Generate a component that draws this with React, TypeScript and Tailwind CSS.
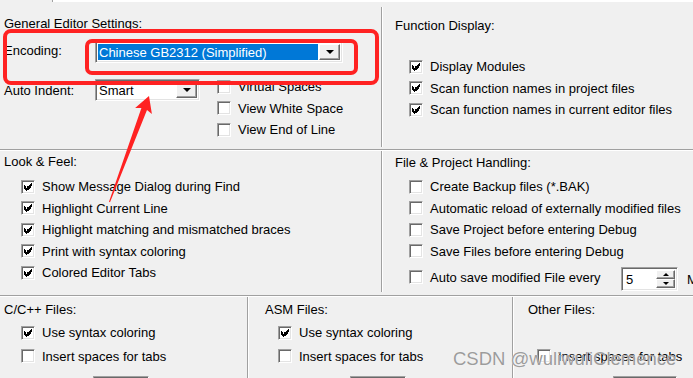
import clsx from "clsx";

const SUNKEN =
  "border border-t-[#a0a0a0] border-l-[#a0a0a0] border-b-white border-r-white";
const SUNKEN_INNER = "shadow-[inset_1px_1px_0_#696969,inset_-1px_-1px_0_#e3e3e3]";
const RAISED =
  "border border-t-white border-l-white border-b-[#696969] border-r-[#696969] shadow-[inset_-1px_-1px_0_#a0a0a0] bg-[#f0f0f0]";

function CheckMark() {
  // classic 7x7 pixel tick
  return (
    <svg width="8" height="8" viewBox="0 0 7 7" shapeRendering="crispEdges">
      <rect x="6" y="0" width="1" height="1" />
      <rect x="5" y="1" width="2" height="1" />
      <rect x="0" y="2" width="1" height="1" />
      <rect x="4" y="2" width="3" height="1" />
      <rect x="0" y="3" width="2" height="1" />
      <rect x="3" y="3" width="3" height="1" />
      <rect x="0" y="4" width="5" height="1" />
      <rect x="1" y="5" width="3" height="1" />
      <rect x="2" y="6" width="1" height="1" />
    </svg>
  );
}

function Box({ checked }: { checked?: boolean }) {
  return (
    <span
      className={clsx(
        "flex h-[14px] w-[14px] shrink-0 items-center justify-center bg-white",
        SUNKEN,
        SUNKEN_INNER
      )}
    >
      {checked && <CheckMark />}
    </span>
  );
}

function Row({ label, checked, className }: { label: string; checked?: boolean; className?: string }) {
  return (
    <div className={clsx("flex items-center gap-[7px] whitespace-nowrap", className ?? "h-[21.5px]")}>
      <Box checked={checked} />
      <span>{label}</span>
    </div>
  );
}

function DownTri() {
  return <span className="h-0 w-0 border-x-[4px] border-t-[4px] border-x-transparent border-t-black" />;
}

function Combo({ width, value, selected }: { width: string; value: string; selected?: boolean }) {
  return (
    <div className={clsx("h-[22px] shrink-0", width, SUNKEN)}>
      <div className={clsx("flex h-full bg-white p-[2px]", SUNKEN_INNER)}>
        <span
          className={clsx(
            "flex flex-1 items-center whitespace-nowrap pl-[1px]",
            selected && "bg-[#0078d7] text-white"
          )}
        >
          {value}
        </span>
        <span className={clsx("ml-[1px] flex w-[21px] items-center justify-center", RAISED)}>
          <DownTri />
        </span>
      </div>
    </div>
  );
}

function Spinner() {
  return (
    <div className={clsx("h-[24px] w-[57px] shrink-0", SUNKEN)}>
      <div className={clsx("flex h-full bg-white p-[2px]", SUNKEN_INNER)}>
        <span className="flex flex-1 items-center pl-[2px]">5</span>
        <div className="flex w-[19px] flex-col">
          <span className={clsx("flex flex-1 items-center justify-center", RAISED)}>
            <span className="h-0 w-0 border-x-[3px] border-b-[3px] border-x-transparent border-b-black" />
          </span>
          <span className={clsx("flex flex-1 items-center justify-center", RAISED)}>
            <span className="h-0 w-0 border-x-[3px] border-t-[3px] border-x-transparent border-t-black" />
          </span>
        </div>
      </div>
    </div>
  );
}

function TabSize({ className, width }: { className: string; width: string }) {
  return (
    <div className={clsx("h-[20px]", width, className, SUNKEN)}>
      <div className={clsx("flex h-full justify-end bg-white p-[2px]", SUNKEN_INNER)}>
        <span className={clsx("w-[17px]", RAISED)} />
      </div>
    </div>
  );
}

function HLine() {
  return <div className="h-[2px] border-t border-b border-t-[#a0a0a0] border-b-white" />;
}

function VLine({ className }: { className?: string }) {
  return <div className={clsx("w-[2px] shrink-0 border-l border-r border-l-[#a0a0a0] border-r-white", className)} />;
}

export default function App() {
  return (
    <div className="relative h-[378px] w-[693px] overflow-hidden bg-[#f0f0f0] font-['Liberation_Sans',Arial,sans-serif] text-[13px] leading-[15px] text-black">
      {/* bottom edge of the list above */}
      <div className="flex h-[2px]">
        <div className="w-[52px]" />
        <div className="flex-1 border-l border-l-[#a0a0a0] bg-white" />
      </div>

      {/* general editor settings / function display */}
      <div className="flex h-[147px]">
        <div className="w-[381px] shrink-0 pl-[4px] pt-[14px]">
          <p>General Editor Settings:</p>
          <div className="mt-[10px] flex items-start">
            <span className="mt-[2px] w-[91px] shrink-0">Encoding:</span>
            <Combo width="w-[248px]" value="Chinese GB2312 (Simplified)" selected />
          </div>
          <div className="mt-[16px] flex items-start">
            <span className="mt-[4px] w-[91px] shrink-0">Auto Indent:</span>
            <Combo width="w-[105px]" value="Smart" />
            <div className="-mt-[3px] ml-[17px] flex flex-col">
              <Row label="Virtual Spaces" />
              <Row label="View White Space" />
              <Row label="View End of Line" />
            </div>
          </div>
        </div>
        <VLine className="mb-[2px] mt-[5px]" />
        <div className="flex-1 pl-[12px] pt-[16px]">
          <p>Function Display:</p>
          <div className="ml-[14px] mt-[23px]">
            <Row label="Display Modules" checked />
            <Row label="Scan function names in project files" checked />
            <Row label="Scan function names in current editor files" checked />
          </div>
        </div>
      </div>
      <HLine />

      {/* look & feel / file & project handling */}
      <div className="flex h-[144px]">
        <div className="w-[381px] shrink-0 pl-[4px] pt-[3px]">
          <p>Look &amp; Feel:</p>
          <div className="ml-[17px] mt-[7px]">
            <Row label="Show Message Dialog during Find" checked />
            <Row label="Highlight Current Line" checked />
            <Row label="Highlight matching and mismatched braces" checked />
            <Row label="Print with syntax coloring" checked />
            <Row label="Colored Editor Tabs" checked />
          </div>
        </div>
        <VLine className="mb-[3px]" />
        <div className="flex-1 pl-[12px] pt-[4px]">
          <p>File &amp; Project Handling:</p>
          <div className="ml-[14px] mt-[6px]">
            <Row label="Create Backup files (*.BAK)" />
            <Row label="Automatic reload of externally modified files" />
            <Row label="Save Project before entering Debug" />
            <Row label="Save Files before entering Debug" />
            <div className="mt-[5px] flex items-start whitespace-nowrap">
              <span className="mt-[3px]">
                <Box />
              </span>
              <span className="ml-[7px] mt-[2.5px] w-[191px] shrink-0">Auto save modified File every</span>
              <Spinner />
              <span className="ml-[9px] mt-[4.5px]">Minutes</span>
            </div>
          </div>
        </div>
      </div>
      <HLine />

      {/* file type columns */}
      <div className="flex h-[81px]">
        <div className="w-[247px] shrink-0 pl-[4px] pt-[5px]">
          <p>C/C++ Files:</p>
          <div className="ml-[17px] mt-[4px]">
            <Row label="Use syntax coloring" checked className="h-[23.5px]" />
            <Row label="Insert spaces for tabs" className="h-[23.5px]" />
          </div>
          <TabSize className="ml-[89px] mt-[8px]" width="w-[56px]" />
        </div>
        <VLine />
        <div className="w-[263px] shrink-0 pl-[16px] pt-[5px]">
          <p>ASM Files:</p>
          <div className="ml-[13px] mt-[4px]">
            <Row label="Use syntax coloring" checked className="h-[23.5px] gap-[6px]" />
            <Row label="Insert spaces for tabs" className="h-[23.5px] gap-[6px]" />
          </div>
          <TabSize className="ml-[85px] mt-[8px]" width="w-[56px]" />
        </div>
        <VLine />
        <div className="flex-1 pl-[14px] pt-[5px]">
          <p>Other Files:</p>
          <div className="ml-[9px] mt-[4px]">
            <div className="h-[23.5px]" />
            <Row label="Insert spaces for tabs" className="h-[23.5px]" />
          </div>
          <TabSize className="ml-[85px] mt-[8px]" width="w-[64px]" />
        </div>
      </div>

      {/* screenshot annotations */}
      <div className="absolute left-[3px] top-[29px] h-[56px] w-[376px] rounded-[8px] border-[4px] border-[#ff2222]" />
      <div className="absolute left-[85px] top-[39px] h-[36px] w-[273px] rounded-[7px] border-[4px] border-[#ff2222]" />
      <svg className="absolute left-0 top-0" width="693" height="378" viewBox="0 0 693 378">
        <polygon
          fill="#ff2222"
          points="109,201.8 141.4,108.1 135.1,107.9 149,96 151.9,114.1 147,110.1 110,202.2"
        />
      </svg>
      <div className="absolute left-[453px] top-[350px] whitespace-nowrap text-[18.5px] leading-none text-[#9c9c9c] [text-shadow:0_0_1px_#ffffff]">
        CSDN @wuliwuliClemence
      </div>
    </div>
  );
}
